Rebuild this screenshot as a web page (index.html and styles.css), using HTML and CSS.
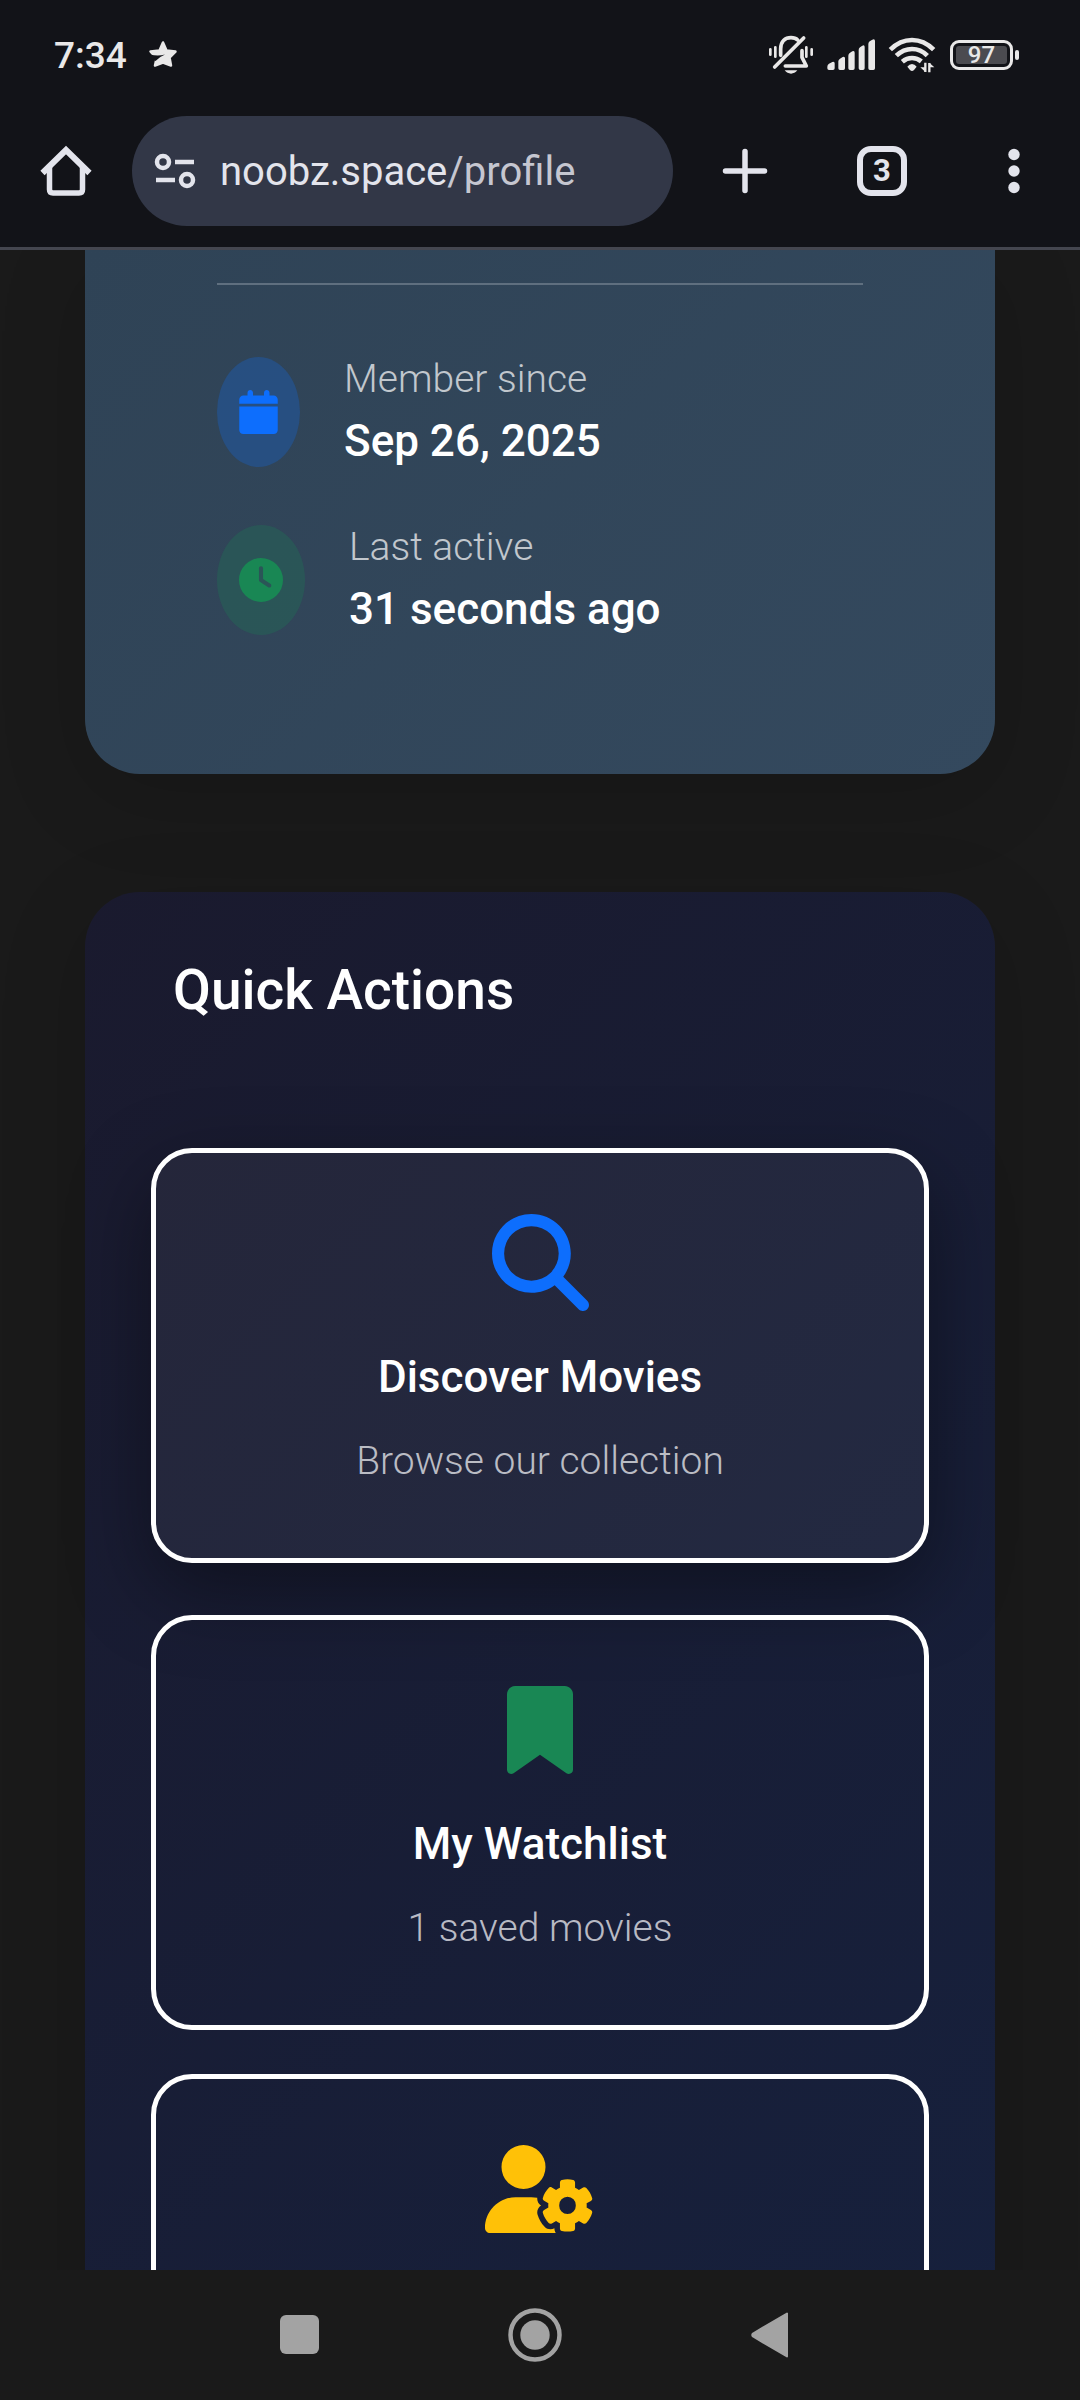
FILE: index.html
```html
<!DOCTYPE html>
<html lang="en">
<head>
<meta charset="utf-8">
<meta name="viewport" content="width=device-width, initial-scale=1">
<title>Profile</title>
<link rel="stylesheet" href="styles.css">
</head>
<body>
<header class="chrome">
  <div class="status">
    <div class="status-group">
      <time class="status-time">7:34</time>
      <svg class="status-star" width="30" height="30" viewBox="0 0 30 30" aria-hidden="true">
        <path d="M15 2.500L18.500 10.500L27.500 11.500L21.500 17.500L23 25.500L15 22.500L7 25.500L8.500 18.500L2.500 11.500L11.500 10.500Z" fill="#e9e8e8" stroke="#e9e8e8" stroke-width="2.500" stroke-linejoin="round"/>
        <path d="M2 14.500Q10 16.500 17 14.500Q11 17 7.500 21L4 19Z" fill="#121318"/>
      </svg>
    </div>
    <div class="status-group status-icons">
      <svg width="46" height="40" viewBox="54 45 138 120" fill="none" stroke="#e9e8e8" stroke-width="11" stroke-linecap="round" stroke-linejoin="round" aria-hidden="true">
        <path d="M92 106V87C92 63 106 53 123 53C131 53 138 55 143 60"/>
        <path d="M106 138H169L156 112V92" />
        <path d="M74 141L161 54"/>
        <path d="M76 82V110M61 88V104M169 82V110M185 88V104" stroke-width="8"/>
        <path d="M104 151H142Q134 161 123 161T104 151Z" fill="#e9e8e8" stroke="none"/>
      </svg>
      <svg width="50" height="34" viewBox="228 54 150 102" fill="#e9e8e8" aria-hidden="true">
        <path d="M232 140Q232 134 237 131L247 126Q254 124 254 130V145Q254 150 249 150H237Q232 150 232 145ZM265 124Q265 119 270 116L278 111Q285 108 285 115V145Q285 150 280 150H270Q265 150 265 145ZM295 107Q295 102 299 99L307 94Q314 91 314 98V145Q314 150 309 150H300Q295 150 295 145ZM326 90Q326 85 330 82L337 77Q344 74 344 81V145Q344 150 339 150H331Q326 150 326 145ZM355 72Q355 67 359 64L367 59Q375 56 375 63V145Q375 150 370 150H360Q355 150 355 145Z"/>
      </svg>
      <svg width="48" height="38" viewBox="411 48 144 114" fill="none" stroke="#e9e8e8" stroke-width="14" aria-hidden="true">
        <path d="M418 89Q447 60 483 60T548 89M436 107Q457 87 483 87T529 107M454 125Q467 114 483 114T511 124"/>
        <path d="M469 140Q475 132 483 132T497 140L489 150Q483 156 477 150Z" fill="#e9e8e8" stroke="none"/>
        <path d="M523 128V156M535 157V129" stroke-width="7"/>
        <path d="M508 142H523V156ZM550 142H535V128Z" fill="#e9e8e8" stroke="none"/>
      </svg>
      <span class="battery"><span class="battery-level">97</span></span>
    </div>
  </div>
  <nav class="toolbar" aria-label="Browser">
    <button class="tool" aria-label="Home">
      <svg width="54" height="54" viewBox="0 0 54 54" fill="none" stroke="#e3e4ec" stroke-width="5.500" stroke-linejoin="round" aria-hidden="true"><path d="M10.500 22V45.500Q10.500 49 14 49H40Q43.500 49 43.500 45.500V22"/><path d="M3.500 29L27 6L50.500 29" stroke-width="6" stroke-linejoin="miter"/></svg>
    </button>
    <div class="address">
      <button class="site-info" aria-label="Site information">
        <svg width="42" height="36" viewBox="0 0 42 36" fill="none" stroke="#e3e4ec" stroke-width="4.500" aria-hidden="true"><circle cx="9" cy="9" r="6"/><circle cx="33" cy="27" r="6"/><path d="M21 9H40M2 27H21"/></svg>
      </button>
      <button class="url">noobz.space<span class="url-path">/profile</span></button>
    </div>
    <button class="tool" aria-label="New tab">
      <svg width="46" height="46" viewBox="0 0 46 46" stroke="#e3e4ec" stroke-width="5.500" stroke-linecap="round" aria-hidden="true"><path d="M23 3.500V42.500M3.500 23H42.500"/></svg>
    </button>
    <button class="tool tool-tabs" aria-label="Tabs"><span class="tab-count">3</span></button>
    <button class="tool" aria-label="Menu">
      <svg width="12" height="46" viewBox="0 0 12 46" fill="#e3e4ec" aria-hidden="true"><circle cx="6" cy="6.500" r="5.700"/><circle cx="6" cy="23" r="5.700"/><circle cx="6" cy="39.500" r="5.700"/></svg>
    </button>
  </nav>
</header>

<main class="page">
  <section class="card profile">
    <dl class="facts">
      <div class="fact">
        <span class="fact-icon fact-icon-blue">
          <svg width="39" height="44" viewBox="0 0 448 512" fill="currentColor" aria-hidden="true"><path d="M96 32V64H48C21.500 64 0 85.500 0 112v48H448V112c0-26.500-21.500-48-48-48H352V32c0-17.700-14.300-32-32-32s-32 14.300-32 32V64H160V32c0-17.700-14.300-32-32-32S96 14.300 96 32zM448 192H0V464c0 26.500 21.500 48 48 48H400c26.500 0 48-21.500 48-48V192z"/></svg>
        </span>
        <div><dt>Member since</dt><dd>Sep 26, 2025</dd></div>
      </div>
      <div class="fact">
        <span class="fact-icon fact-icon-green">
          <svg width="44" height="44" viewBox="0 0 512 512" fill="currentColor" aria-hidden="true"><path d="M256 0a256 256 0 1 1 0 512A256 256 0 1 1 256 0zM232 120V256c0 8 4 15.500 10.700 20l96 64c11 7.400 25.900 4.400 33.300-6.700s4.400-25.900-6.700-33.300L280 243.200V120c0-13.300-10.700-24-24-24s-24 10.700-24 24z"/></svg>
        </span>
        <div><dt>Last active</dt><dd>31 seconds ago</dd></div>
      </div>
    </dl>
  </section>

  <section class="card actions">
    <h2>Quick Actions</h2>
    <div class="tiles">
      <a class="tile tile-active" href="#discover">
        <svg class="blue" width="97" height="97" viewBox="0 0 512 512" fill="currentColor" aria-hidden="true"><path d="M416 208c0 45.900-14.900 88.300-40 122.700L502.600 457.400c12.500 12.500 12.500 32.800 0 45.300s-32.800 12.500-45.300 0L330.700 376c-34.400 25.200-76.800 40-122.700 40C93.100 416 0 322.900 0 208S93.100 0 208 0S416 93.100 416 208zM208 352a144 144 0 1 0 0-288 144 144 0 1 0 0 288z"/></svg>
        <h3>Discover Movies</h3>
        <p>Browse our collection</p>
      </a>
      <a class="tile" href="#watchlist">
        <svg class="green" width="66" height="88" viewBox="0 0 384 512" fill="currentColor" aria-hidden="true"><path d="M0 48V487.700C0 501.100 10.900 512 24.300 512c5 0 9.900-1.500 14-4.400L192 400 345.700 507.600c4.100 2.900 9 4.400 14 4.400c13.400 0 24.300-10.900 24.300-24.300V48c0-26.500-21.500-48-48-48H48C21.500 0 0 21.500 0 48z"/></svg>
        <h3>My Watchlist</h3>
        <p>1 saved movies</p>
      </a>
      <a class="tile" href="#settings" aria-label="Account settings">
        <svg class="yellow" width="110" height="88" viewBox="0 0 640 512" fill="currentColor" aria-hidden="true"><path d="M224 0a128 128 0 1 1 0 256A128 128 0 1 1 224 0zM178.300 304h91.400c11.800 0 23.400 1.200 34.500 3.300c-2.100 18.500 7.400 35.600 21.800 44.800c-16.600 10.600-26.700 31.600-20 53.300c4 12.900 9.400 25.500 16.400 37.600s15.200 23.100 24.400 33c15.700 16.900 39.600 18.400 57.200 8.700v.9c0 9.200 2.700 18.500 7.900 26.300H29.700C13.300 512 0 498.700 0 482.300C0 383.800 79.800 304 178.300 304zM436 218.200c0-7 4.500-13.300 11.300-14.800c10.500-2.400 21.500-3.700 32.700-3.700s22.200 1.300 32.700 3.700c6.800 1.500 11.300 7.800 11.300 14.800v30.600c7.900 3.400 15.400 7.700 22.300 12.800l24.900-14.300c6.100-3.500 13.700-2.700 18.500 2.400c7.600 8.100 14.300 17.200 20.100 27.200s10.300 20.400 13.500 31c2.100 6.700-1.100 13.700-7.200 17.200l-25 14.400c.4 4 .7 8.100 .7 12.300s-.2 8.200-.7 12.300l25 14.400c6.100 3.500 9.200 10.500 7.200 17.200c-3.300 10.600-7.800 21-13.500 31s-12.500 19.100-20.100 27.200c-4.800 5.100-12.500 5.900-18.500 2.400l-24.900-14.300c-6.900 5.100-14.300 9.400-22.300 12.800l0 30.600c0 7-4.500 13.300-11.300 14.800c-10.500 2.400-21.500 3.700-32.700 3.700s-22.200-1.300-32.700-3.700c-6.800-1.500-11.300-7.800-11.300-14.800V454.800c-8-3.400-15.600-7.700-22.500-12.900l-24.700 14.300c-6.100 3.500-13.700 2.700-18.500-2.400c-7.600-8.100-14.300-17.200-20.100-27.200s-10.300-20.400-13.500-31c-2.100-6.700 1.100-13.700 7.200-17.200l24.800-14.300c-.4-4.100-.7-8.200-.7-12.400s.2-8.300 .7-12.400L343.800 325c-6.100-3.500-9.200-10.500-7.200-17.200c3.300-10.600 7.700-21 13.500-31s12.500-19.100 20.100-27.200c4.800-5.100 12.400-5.900 18.500-2.400l24.800 14.300c6.900-5.100 14.500-9.400 22.500-12.900V218.200zm92.100 133.500a48.100 48.100 0 1 0 -96.100 0 48.100 48.100 0 1 0 96.100 0z"/></svg>
      </a>
    </div>
  </section>
</main>

<nav class="system" aria-label="System">
  <button aria-label="Recent apps"><svg width="40" height="40" viewBox="0 0 40 40" aria-hidden="true"><rect width="39" height="39" rx="6" fill="#a3a3a3"/></svg></button>
  <button aria-label="Home screen"><svg width="54" height="54" viewBox="0 0 54 54" fill="#a3a3a3" aria-hidden="true"><circle cx="27" cy="27" r="24.500" fill="none" stroke="#a3a3a3" stroke-width="4.500"/><circle cx="27" cy="27" r="14.700"/></svg></button>
  <button aria-label="Back"><svg width="38" height="46" viewBox="0 0 38 46" aria-hidden="true"><path d="M36 1.500V44.500L2 24.500Q0.500 23 2 21.500Z" fill="#a3a3a3" stroke="#a3a3a3" stroke-width="2" stroke-linejoin="round"/></svg></button>
</nav>
</body>
</html>
```
FILE: styles.css
```css
* {
  box-sizing: border-box;
}

body {
  margin: 0;
  height: 100vh;
  display: flex;
  flex-direction: column;
  background: #1a1a1a;
  color: #fff;
  font-family: Roboto, "Liberation Sans", sans-serif;
}

button {
  border: 0;
  padding: 0;
  background: none;
  color: inherit;
  font: inherit;
  display: flex;
  align-items: center;
  justify-content: center;
}

svg {
  display: block;
  flex: none;
}

h2, h3, p, dl, dt, dd {
  margin: 0;
}

/* Status bar and browser toolbar */
.chrome {
  flex: none;
  background: #121318;
  border-bottom: 3px solid #44464f;
}

.status {
  display: flex;
  justify-content: space-between;
  align-items: center;
  height: 110px;
  padding: 0 61px 0 54px;
}

.status-group {
  display: flex;
  align-items: center;
  gap: 21px;
}

.status-icons {
  gap: 12px;
}

.status-time {
  color: #e9e8e8;
  font-size: 37px;
  font-weight: 500;
}

.battery {
  position: relative;
  width: 63px;
  height: 30px;
  margin: 0 6px 0 2px;
  padding: 3px;
  border: 3px solid #e9e8e8;
  border-radius: 9px;
}

.battery::after {
  content: "";
  position: absolute;
  left: 62px;
  top: 7px;
  width: 4px;
  height: 10px;
  border-radius: 2px;
  background: #e9e8e8;
}

.battery-level {
  display: block;
  border-radius: 3px;
  background: #4b4b50;
  color: #e9e8e8;
  font-size: 24px;
  font-weight: 500;
  line-height: 18px;
  text-align: center;
}

.toolbar {
  display: flex;
  align-items: center;
  padding: 6px 0 21px;
}

.tool {
  width: 132px;
  height: 110px;
}

.tool-tabs {
  margin-left: 5px;
}

.address {
  flex: 1;
  display: flex;
  align-items: center;
  gap: 24px;
  height: 110px;
  margin-right: 6px;
  padding: 0 22px;
  border-radius: 55px;
  background: #323747;
}

.url {
  color: #e3e4ec;
  font-size: 40px;
}

.url-path {
  color: #c5c6d0;
}

.tab-count {
  width: 50px;
  height: 50px;
  border: 6px solid #e3e4ec;
  border-radius: 14px;
  color: #e3e4ec;
  font-size: 31px;
  font-weight: 700;
  line-height: 38px;
}

/* Profile page */
.page {
  flex: 1;
  min-height: 0;
  overflow: hidden;
  padding: 0 85px;
}

.card {
  border-radius: 55px;
  box-shadow: 0 22px 88px rgba(0, 0, 0, 0.15);
}

.profile {
  padding: 33px 132px 132px;
  border-radius: 0 0 55px 55px;
  background: linear-gradient(135deg, #2f4356, #34495e);
}

.facts {
  display: flex;
  flex-direction: column;
  gap: 44px;
  padding-top: 65px;
  border-top: 2px solid #5f6f7f;
}

.fact {
  display: flex;
  align-items: center;
  gap: 44px;
}

.fact-icon {
  padding: 33px 22px;
  border-radius: 50%;
}

.fact-icon-blue {
  background: rgba(13, 110, 253, 0.25);
  color: #0d6efd;
}

.fact-icon-green {
  background: rgba(25, 135, 84, 0.25);
  color: #198754;
}

.fact dt {
  color: #c1c7cd;
  font-size: 39px;
  font-weight: 300;
  line-height: 58px;
}

.fact dd {
  font-size: 44px;
  font-weight: 500;
  line-height: 66px;
}

/* Quick actions */
.actions {
  margin-top: 118px;
  padding: 66px;
  background: linear-gradient(135deg, #1a1a2e, #16213e);
}

.actions h2 {
  padding: 0 22px;
  font-size: 55px;
  font-weight: 500;
  line-height: 64px;
}

.tiles {
  display: flex;
  flex-direction: column;
  gap: 44px;
  padding-top: 126px;
}

.tile {
  display: flex;
  flex-direction: column;
  align-items: center;
  min-height: 415px;
  padding: 66px;
  border: 5px solid #fff;
  border-radius: 41px;
  color: #fff;
  text-align: center;
  text-decoration: none;
}

.tile-active {
  margin-bottom: 8px;
  padding-top: 61px;
  background: rgba(255, 255, 255, 0.05);
  box-shadow: 0 28px 82px rgba(0, 0, 0, 0.4);
}

.tile h3 {
  margin-top: 44px;
  font-size: 44px;
  font-weight: 500;
  line-height: 53px;
}

.tile-active h3 {
  margin-top: 40px;
}

.tile p {
  margin-top: 28px;
  color: #b8bac4;
  font-size: 39px;
  font-weight: 300;
  line-height: 58px;
}

.tile-active p {
  color: #babcc4;
}

.blue {
  color: #0d6efd;
}

.green {
  color: #198754;
}

.yellow {
  color: #ffc107;
}

/* System navigation */
.system {
  flex: none;
  display: flex;
  justify-content: center;
  height: 130px;
  padding-right: 10px;
  background: #1a1a1a;
}

.system button {
  width: 235px;
}
```
